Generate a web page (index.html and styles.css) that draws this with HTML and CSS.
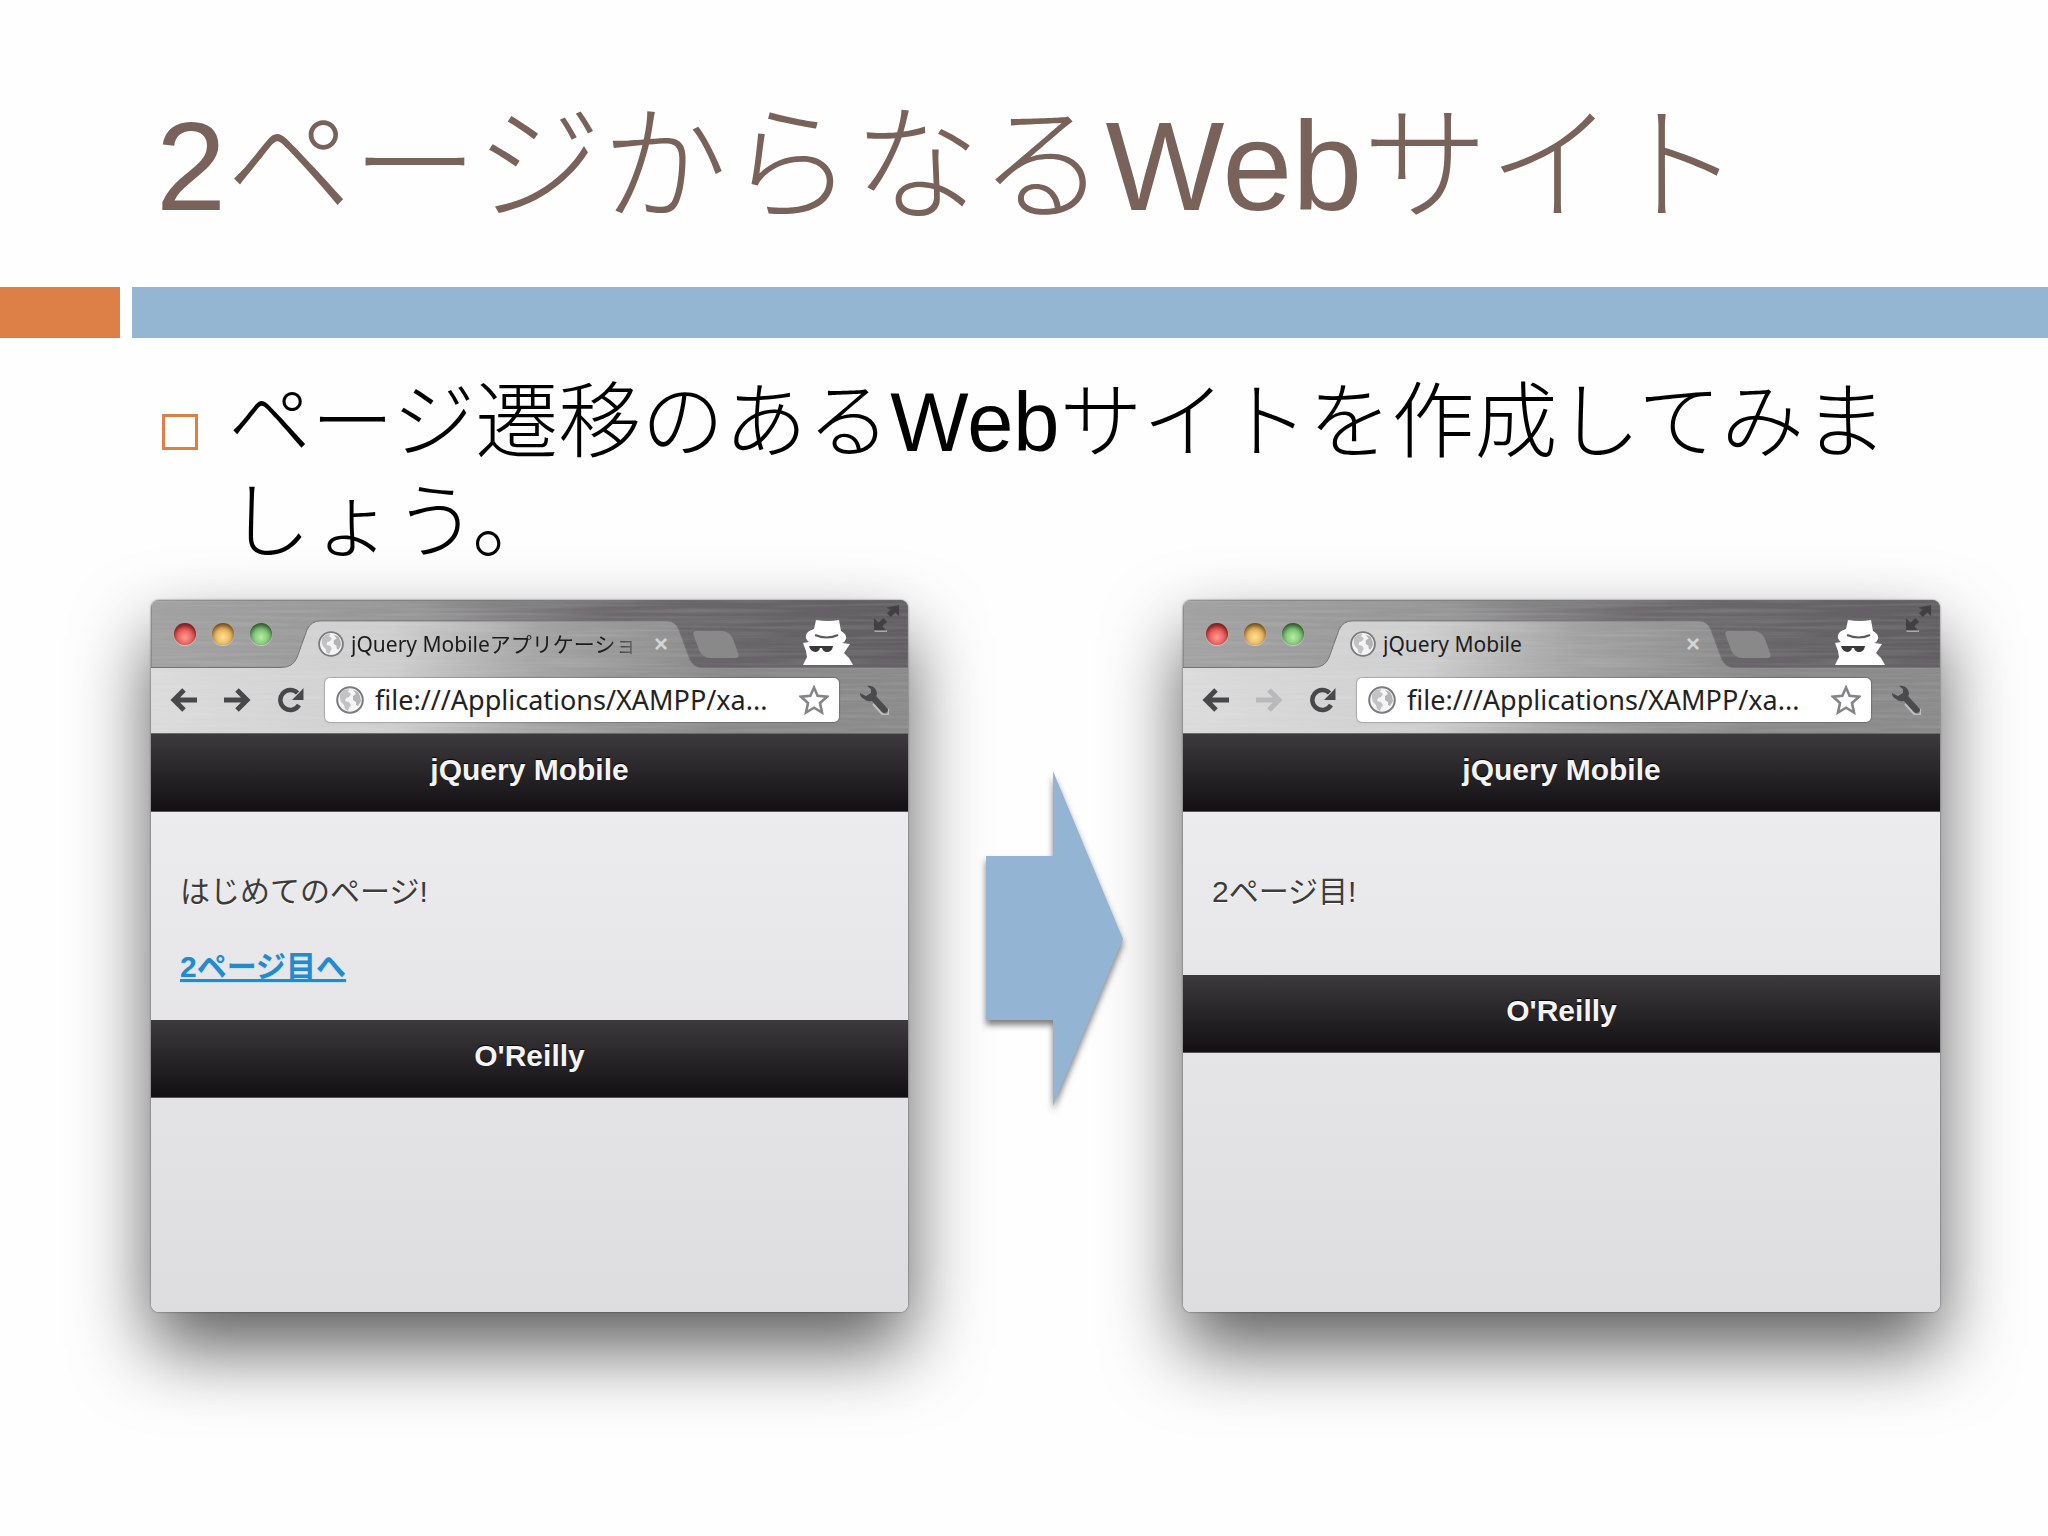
FILE: index.html
```
<!DOCTYPE html>
<html lang="ja">

<head>
    <meta charset="UTF-8">
    <meta name="viewport" content="width=device-width, initial-scale=1.0">
    <title>2ページからなるWebサイト</title>
    <link rel="stylesheet" href="styles.css">
</head>

<body>
    <!-- shared icons -->
    <svg class="defs" width="0" height="0" aria-hidden="true">
        <defs>
            <linearGradient id="strip" x1="0" x2="1" y1="0" y2="0">
                <stop offset="0" stop-color="#a3a2a3" />
                <stop offset="0.35" stop-color="#969596" />
                <stop offset="0.6" stop-color="#6c6a6c" />
                <stop offset="1" stop-color="#605e60" />
            </linearGradient>
            <filter id="brushed" x="0" y="0" width="100%" height="100%">
                <feTurbulence type="fractalNoise" baseFrequency="0.008 0.3" numOctaves="2" seed="4" />
                <feColorMatrix values="0 0 0 0 1  0 0 0 0 1  0 0 0 0 1  1.2 0 0 0 -0.45" />
            </filter>
        </defs>
        <symbol id="globe" viewBox="0 0 28 28">
            <circle cx="14" cy="14" r="12.8" fill="#f4f4f4" stroke="#7b7b7d" stroke-width="2" />
            <path d="M4 8 8 4 13 3 12 6 15 8 13 11 10 12 9 15 13 16 15 19 13 22 12 25 9 23 8 19 5 16 4 12Z" fill="#c2c2c4" />
            <path d="M17 4 22 6 24 10 25 15 22 20 20 19 20 16 17 14 17 10 20 8Z" fill="#b4b4b6" />
        </symbol>
        <symbol id="back" viewBox="0 0 28 26">
            <path d="M27 13H5M14 3 4 13l10 10" fill="none" stroke="currentColor" stroke-width="5" />
        </symbol>
        <symbol id="forward" viewBox="0 0 28 26">
            <path d="M1 13h22M14 3l10 10-10 10" fill="none" stroke="currentColor" stroke-width="5" />
        </symbol>
        <symbol id="reload" viewBox="0 0 28 26">
            <path d="M21.500 6A10 10 0 1 0 23 18" fill="none" stroke="currentColor" stroke-width="4.500" />
            <path d="M27.500 1v12H16l4-4 4-4Z" fill="currentColor" />
        </symbol>
        <symbol id="star" viewBox="0 0 30 30">
            <path d="m15 2.500 3.600 8.300 9.400.9-7 6.300 2 9.500-8-4.800-8 4.800 2-9.500-7-6.300 9.400-.9Z" fill="#fff" stroke="#858587" stroke-width="2.600" />
        </symbol>
        <symbol id="wrench" viewBox="0 0 30 30">
            <path d="M14 19 23 29q4 2 6 0 2-2 0-5" fill="none" stroke="#e0e0e0" stroke-width="2" opacity=".6" />
            <path d="M8 1q6-1 9 4 2 4 0 6l11 12q2 2 0 4-2 2-5 0L13 16q-5 1-8-2-4-2-4-6l6 3 5-3 0-4Z" fill="#4b4a4c" />
        </symbol>
        <symbol id="spy" viewBox="0 0 50 46">
            <path d="M13 1q12 2 23 0l2 11q6 3 5 8-1 3-4 4l8 1-6 9 5 5 4 7H0l4-8-1-6-3-8 6-1q-4-3-3-7 1-4 8-6Z" fill="#fff" />
            <path d="M12 16q12 5 23 0" fill="none" stroke="#5a585a" stroke-width="2" />
            <path d="M6 27h24q-1 6-6 6-4 0-5-4h-2q-1 4-5 4-5-1-6-6Z" fill="#39373a" />
        </symbol>
        <symbol id="expand" viewBox="0 0 30 30">
            <path d="M2 29h13M3 30l-1-2" stroke="#aaa" stroke-width="2" />
            <path d="M14 4 28 1v12l-4-4-5 5-4-4 4-4ZM1 15v13h13l-4-4 5-5-4-4-5 5Z" fill="#424042" />
        </symbol>
    </svg>

    <header class="slide-header">
        <h1>2ページからなるWebサイト</h1>
    </header>
    <div class="band">
        <span class="band-accent"></span>
        <span class="band-main"></span>
    </div>

    <main class="slide-body">
        <ul class="points">
            <li>ページ遷移のあるWebサイトを作成してみましょう。</li>
        </ul>

        <div class="flow">
            <section class="window">
                <div class="chrome">
                    <svg class="metal" viewBox="0 0 757 134" preserveAspectRatio="none" aria-hidden="true">
                        <path d="M0 0H757V68H551Q543 68 539 60L528 30Q524 21 516 21H170Q160 21 156 30L146 58Q142 68 130 68H0Z" fill="url(#strip)" stroke="#6f6e70" stroke-width="1" />
                        <rect width="757" height="134" filter="url(#brushed)" opacity=".2" />
                    </svg>
                    <div class="tabs">
                        <button class="light red" aria-label="閉じる"></button>
                        <button class="light yellow" aria-label="最小化"></button>
                        <button class="light green" aria-label="拡大"></button>
                        <div class="tab">
                            <svg class="favicon"><use href="#globe" /></svg>
                            <span class="tab-title fade">jQuery Mobileアプリケーショ</span>
                            <button class="tab-close" aria-label="タブを閉じる">×</button>
                        </div>
                        <button class="new-tab" aria-label="新しいタブ"></button>
                        <svg class="spy"><use href="#spy" /></svg>
                        <button class="expand" aria-label="フルスクリーン"><svg><use href="#expand" /></svg></button>
                    </div>
                    <div class="toolbar">
                        <button class="tool" aria-label="戻る"><svg><use href="#back" /></svg></button>
                        <button class="tool" aria-label="進む"><svg><use href="#forward" /></svg></button>
                        <button class="tool" aria-label="再読み込み"><svg><use href="#reload" /></svg></button>
                        <div class="address">
                            <svg class="globe"><use href="#globe" /></svg>
                            <input type="text" aria-label="アドレス" value="file:///Applications/XAMPP/xa...">
                            <button class="star" aria-label="ブックマーク"><svg><use href="#star" /></svg></button>
                        </div>
                        <button class="wrench" aria-label="設定"><svg><use href="#wrench" /></svg></button>
                    </div>
                </div>
                <div class="page">
                    <h2 class="bar">jQuery Mobile</h2>
                    <div class="content">
                        <p>はじめてのページ!</p>
                        <a href="#page2">2ページ目へ</a>
                    </div>
                    <div class="bar">O'Reilly</div>
                </div>
            </section>

            <svg class="arrow" viewBox="0 0 137 335" aria-hidden="true">
                <path d="M0 85H67V0L137 168 67 335V249H0Z" fill="#93b5d3" />
            </svg>

            <section class="window" id="page2">
                <div class="chrome">
                    <svg class="metal" viewBox="0 0 757 134" preserveAspectRatio="none" aria-hidden="true">
                        <path d="M0 0H757V68H551Q543 68 539 60L528 30Q524 21 516 21H170Q160 21 156 30L146 58Q142 68 130 68H0Z" fill="url(#strip)" stroke="#6f6e70" stroke-width="1" />
                        <rect width="757" height="134" filter="url(#brushed)" opacity=".2" />
                    </svg>
                    <div class="tabs">
                        <button class="light red" aria-label="閉じる"></button>
                        <button class="light yellow" aria-label="最小化"></button>
                        <button class="light green" aria-label="拡大"></button>
                        <div class="tab">
                            <svg class="favicon"><use href="#globe" /></svg>
                            <span class="tab-title">jQuery Mobile</span>
                            <button class="tab-close" aria-label="タブを閉じる">×</button>
                        </div>
                        <button class="new-tab" aria-label="新しいタブ"></button>
                        <svg class="spy"><use href="#spy" /></svg>
                        <button class="expand" aria-label="フルスクリーン"><svg><use href="#expand" /></svg></button>
                    </div>
                    <div class="toolbar">
                        <button class="tool" aria-label="戻る"><svg><use href="#back" /></svg></button>
                        <button class="tool" aria-label="進む" disabled><svg><use href="#forward" /></svg></button>
                        <button class="tool" aria-label="再読み込み"><svg><use href="#reload" /></svg></button>
                        <div class="address">
                            <svg class="globe"><use href="#globe" /></svg>
                            <input type="text" aria-label="アドレス" value="file:///Applications/XAMPP/xa...">
                            <button class="star" aria-label="ブックマーク"><svg><use href="#star" /></svg></button>
                        </div>
                        <button class="wrench" aria-label="設定"><svg><use href="#wrench" /></svg></button>
                    </div>
                </div>
                <div class="page">
                    <h2 class="bar">jQuery Mobile</h2>
                    <div class="content">
                        <p>2ページ目!</p>
                    </div>
                    <div class="bar">O'Reilly</div>
                </div>
            </section>
        </div>
    </main>
</body>

</html>
```
FILE: styles.css
```
*,
*::before {
    box-sizing: border-box;
}

body {
    min-height: 100vh;
    margin: 0;
    background-color: #fefefe;
    font-family: "Liberation Sans", "Noto Sans CJK JP", sans-serif;
}

button {
    padding: 0;
    border: none;
    background: none;
    flex: none;
    cursor: pointer;
}

svg {
    display: block;
    flex: none;
}

.defs {
    position: absolute;
}

/* slide */
.slide-header {
    padding: 73px 108px 26px 156px;
}

h1 {
    margin: 0;
    color: #786259;
    font-size: 126px;
    font-weight: 300;
    line-height: 188px;
}

.band {
    display: flex;
    gap: 12px;
    height: 51px;
}

.band-accent {
    width: 120px;
    background-color: #dd8047;
}

.band-main {
    flex: 1;
    background-color: #94b6d2;
}

.slide-body {
    padding: 35px 108px 150px 151px;
}

.points {
    margin: 0;
    padding: 0;
    list-style: none;
}

.points li {
    display: flex;
    gap: 30px;
    padding-left: 11px;
    font-size: 83px;
    font-weight: 300;
    line-height: 100px;
}

.points li::before {
    content: "";
    flex: none;
    width: 36px;
    height: 36px;
    margin-top: 41px;
    border: 3px solid #dd8047;
}

.flow {
    display: flex;
    margin-top: 27px;
}

.arrow {
    width: 137px;
    height: 335px;
    margin: 171px 60px 0 78px;
    overflow: visible;
    filter: drop-shadow(0 5px 3px rgba(0, 0, 0, 0.5));
}

/* browser window */
.window {
    display: flex;
    flex-direction: column;
    flex: 1;
    min-width: 0;
    min-height: 712px;
    border-radius: 8px;
    overflow: hidden;
    box-shadow: 0 0 2px rgba(0, 0, 0, 0.6), 0 36px 76px rgba(0, 0, 0, 0.64);
}

.chrome {
    position: relative;
    background: linear-gradient(to right, #dcdbdc 0%, #cfcecf 32%, #a2a2a2 52%, #8b8a8b 75%, #8b8a8b 100%);
    border-bottom: 1px solid #6c6a6c;
}

.metal {
    position: absolute;
    width: 100%;
    height: 100%;
}

.tabs,
.toolbar {
    position: relative;
    display: flex;
    align-items: center;
}

.tabs {
    height: 68px;
    padding-left: 23px;
}

.light {
    width: 22px;
    height: 22px;
    margin-right: 16px;
    border-radius: 50%;
    box-shadow: inset 0 3px 4px rgba(0, 0, 0, 0.5), 0 1px 1px #ccc;
}

.red {
    background: radial-gradient(circle at 50% 65%, #ff9a94, #e04848 60%, #a83434);
}

.yellow {
    background: radial-gradient(circle at 50% 65%, #ffdf90, #e0a850 60%, #a87434);
}

.green {
    background: radial-gradient(circle at 50% 65%, #b4eca0, #70b868 60%, #448444);
}

.tab {
    display: flex;
    align-items: center;
    flex: 1;
    min-width: 0;
    height: 47px;
    margin: 20px 28px 0 30px;
}

.favicon {
    width: 26px;
    height: 26px;
}

.tab-title {
    flex: 1;
    margin-left: 7px;
    overflow: hidden;
    white-space: nowrap;
    color: #1c1c1c;
    font: 21px/30px "Noto Sans", "Noto Sans CJK JP", sans-serif;
}

.fade {
    -webkit-mask-image: linear-gradient(to right, #000 84%, transparent 100%);
    mask-image: linear-gradient(to right, #000 84%, transparent 100%);
}

.tab-close {
    width: 16px;
    color: #d4d4d4;
    font: bold 24px/24px "Liberation Sans", sans-serif;
}

.new-tab {
    width: 38px;
    height: 27px;
    margin: 20px 68px 0 0;
    border-radius: 4px 8px 4px 8px;
    background-color: #8a898a;
    transform: skewX(20deg);
}

.spy {
    width: 50px;
    height: 46px;
    margin-top: 16px;
}

.expand {
    margin: 0 7px 32px 20px;
}

.expand svg {
    width: 28px;
    height: 28px;
}

.toolbar {
    height: 65px;
    padding: 0 19px 2px;
}

.tool {
    margin-right: 25px;
    color: #48474a;
}

.tool:disabled {
    color: #b9b8ba;
}

.tool svg {
    width: 28px;
    height: 26px;
}

.address {
    display: flex;
    align-items: center;
    flex: 1;
    min-width: 0;
    height: 44px;
    margin-left: -4px;
    padding: 0 10px 0 11px;
    border-radius: 5px;
    background-color: #fff;
    box-shadow: 0 0 1px 1px rgba(0, 0, 0, 0.2);
}

.globe {
    width: 28px;
    height: 28px;
}

.address input {
    flex: 1;
    min-width: 0;
    padding: 0 0 0 11px;
    border: none;
    outline: none;
    background: none;
    color: #222;
    font: 27px/36px "Noto Sans", sans-serif;
}

.star svg,
.wrench svg {
    width: 30px;
    height: 30px;
}

.wrench {
    margin-left: 20px;
}

/* jQuery Mobile page */
.page {
    flex: 1;
    background: linear-gradient(#eeedef, #dddcde);
    color: #3c3c3c;
    font-size: 30px;
    line-height: 45px;
}

.bar {
    height: 78px;
    margin: 0;
    padding-top: 13px;
    background: linear-gradient(#3c3a3d, #121013);
    border-bottom: 1px solid #555;
    color: #f4f4f4;
    font-size: 30px;
    font-weight: bold;
    text-align: center;
    text-shadow: 0 -1px 1px #000;
}

.content {
    padding: 27px 29px 31px;
    text-shadow: 0 1px 0 #fff;
}

.content p {
    margin: 30px 0;
}

.content a {
    display: inline-block;
    color: #2489ce;
    font-weight: bold;
    text-shadow: 0 1px 1px #b8e4fa;
}
```
